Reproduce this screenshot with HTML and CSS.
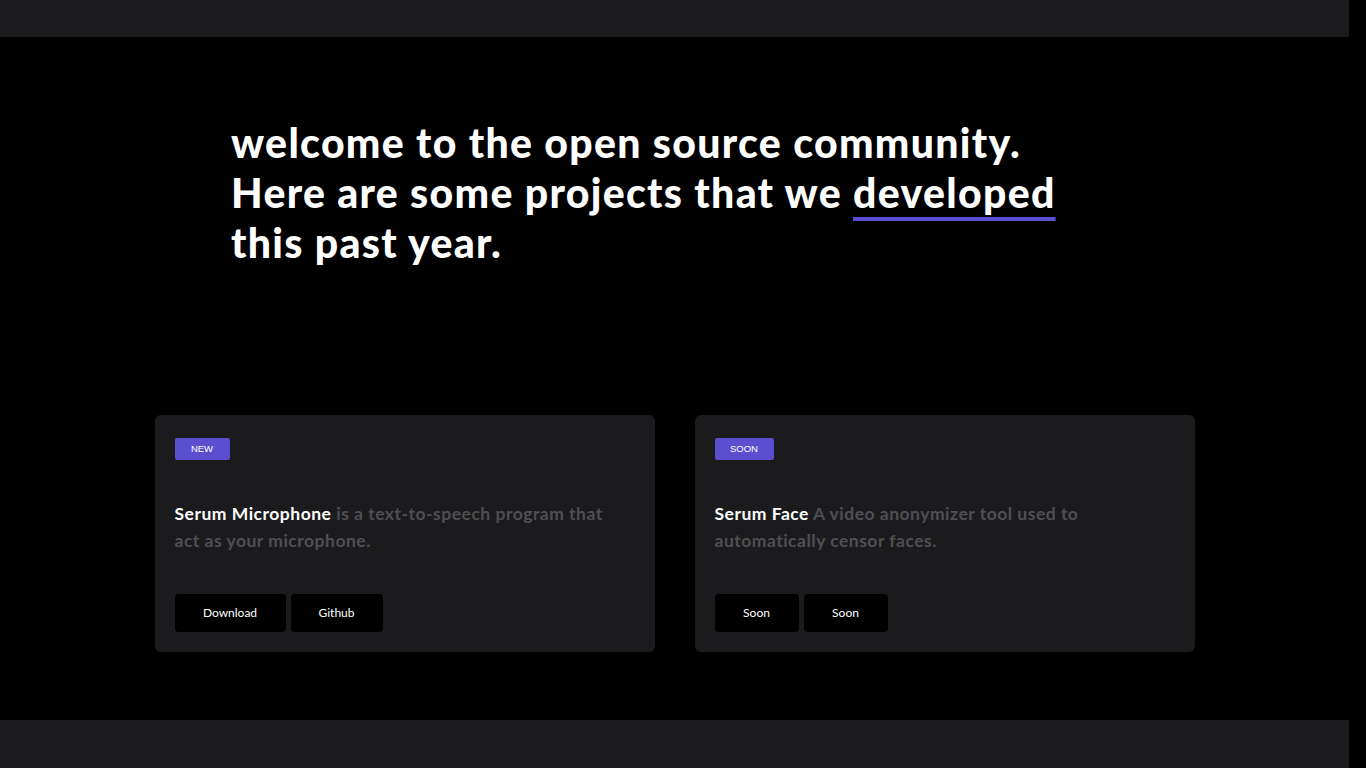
FILE: index.html
```html
<!DOCTYPE html>
<html lang="en">
<head>
<meta charset="utf-8">
<title>Open Source</title>
<link rel="stylesheet" href="styles.css">
</head>
<body>
<div class="page">
  <header class="topbar"></header>
  <main class="main">
    <section class="hero">
      <h1 class="hero-title">welcome to the open source community.<br>Here are some projects that we <span class="underline">developed</span><br>this past year.</h1>
    </section>
    <section class="cards">
      <article class="card">
        <span class="badge">NEW</span>
        <p class="desc"><span class="name">Serum Microphone</span> is a text-to-speech program that act as your microphone.</p>
        <div class="actions">
          <a class="btn btn-download" href="#">Download</a>
          <a class="btn btn-github" href="#">Github</a>
        </div>
      </article>
      <article class="card">
        <span class="badge badge-soon">SOON</span>
        <p class="desc"><span class="name">Serum Face</span> A video anonymizer tool used to automatically censor faces.</p>
        <div class="actions">
          <a class="btn btn-soon" href="#">Soon</a>
          <a class="btn btn-soon" href="#">Soon</a>
        </div>
      </article>
    </section>
  </main>
  <footer class="footer"></footer>
</div>
</body>
</html>
```
FILE: styles.css
```css
html, body {
  margin: 0;
  padding: 0;
  background: #000;
  height: 100%;
  overflow: hidden;
}
body {
  font-family: "Lato", "Open Sans", sans-serif;
  color: #fff;
}
.page {
  width: 1349px;
  display: flex;
  flex-direction: column;
}
.topbar {
  height: 37px;
  background: #1b1b1d;
}
.main {
  display: flex;
  flex-direction: column;
  align-items: center;
}
.hero {
  width: 1349px;
  box-sizing: border-box;
  padding: 81px 0 0 231px;
  height: 378px;
}
.hero-title {
  margin: 0;
  font-size: 41px;
  line-height: 50px;
  font-weight: 900;
  letter-spacing: 1.3px;
}
.underline {
  text-decoration: underline;
  text-decoration-color: #5b4fcf;
  text-decoration-thickness: 4px;
  text-underline-offset: 9px;
  text-decoration-skip-ink: none;
}
.cards {
  display: flex;
  gap: 40px;
  justify-content: center;
}
.card {
  width: 500px;
  height: 237px;
  box-sizing: border-box;
  background: #1b1b1d;
  border-radius: 6px;
  padding: 23px 20px 20px;
  display: flex;
  flex-direction: column;
  align-items: flex-start;
}
.badge {
  display: inline-block;
  background: #5b4fcf;
  color: #fff;
  font-family: "Liberation Sans", Arial, sans-serif;
  font-size: 9.5px;
  line-height: 22px;
  height: 22px;
  width: 55px;
  text-align: center;
  border-radius: 2px;
}
.badge-soon {
  width: 59px;
}
.desc {
  margin: 40px 0 0;
  max-width: 450px;
  font-size: 17.5px;
  line-height: 27px;
  font-weight: 700;
  letter-spacing: 0.5px;
  color: #4f4f53;
}
.name {
  color: #fff;
  font-weight: 700;
}
.actions {
  margin-top: auto;
  display: flex;
  gap: 5px;
}
.btn {
  display: block;
  height: 38px;
  line-height: 38px;
  background: #000;
  color: #fff;
  text-decoration: none;
  font-family: "Lato", sans-serif;
  font-size: 12px;
  text-align: center;
  border-radius: 4px;
}
.btn-download { width: 111px; }
.btn-github { width: 92px; }
.btn-soon { width: 84px; }
.footer {
  margin-top: 68px;
  height: 48px;
  background: #1b1b1d;
}
```
